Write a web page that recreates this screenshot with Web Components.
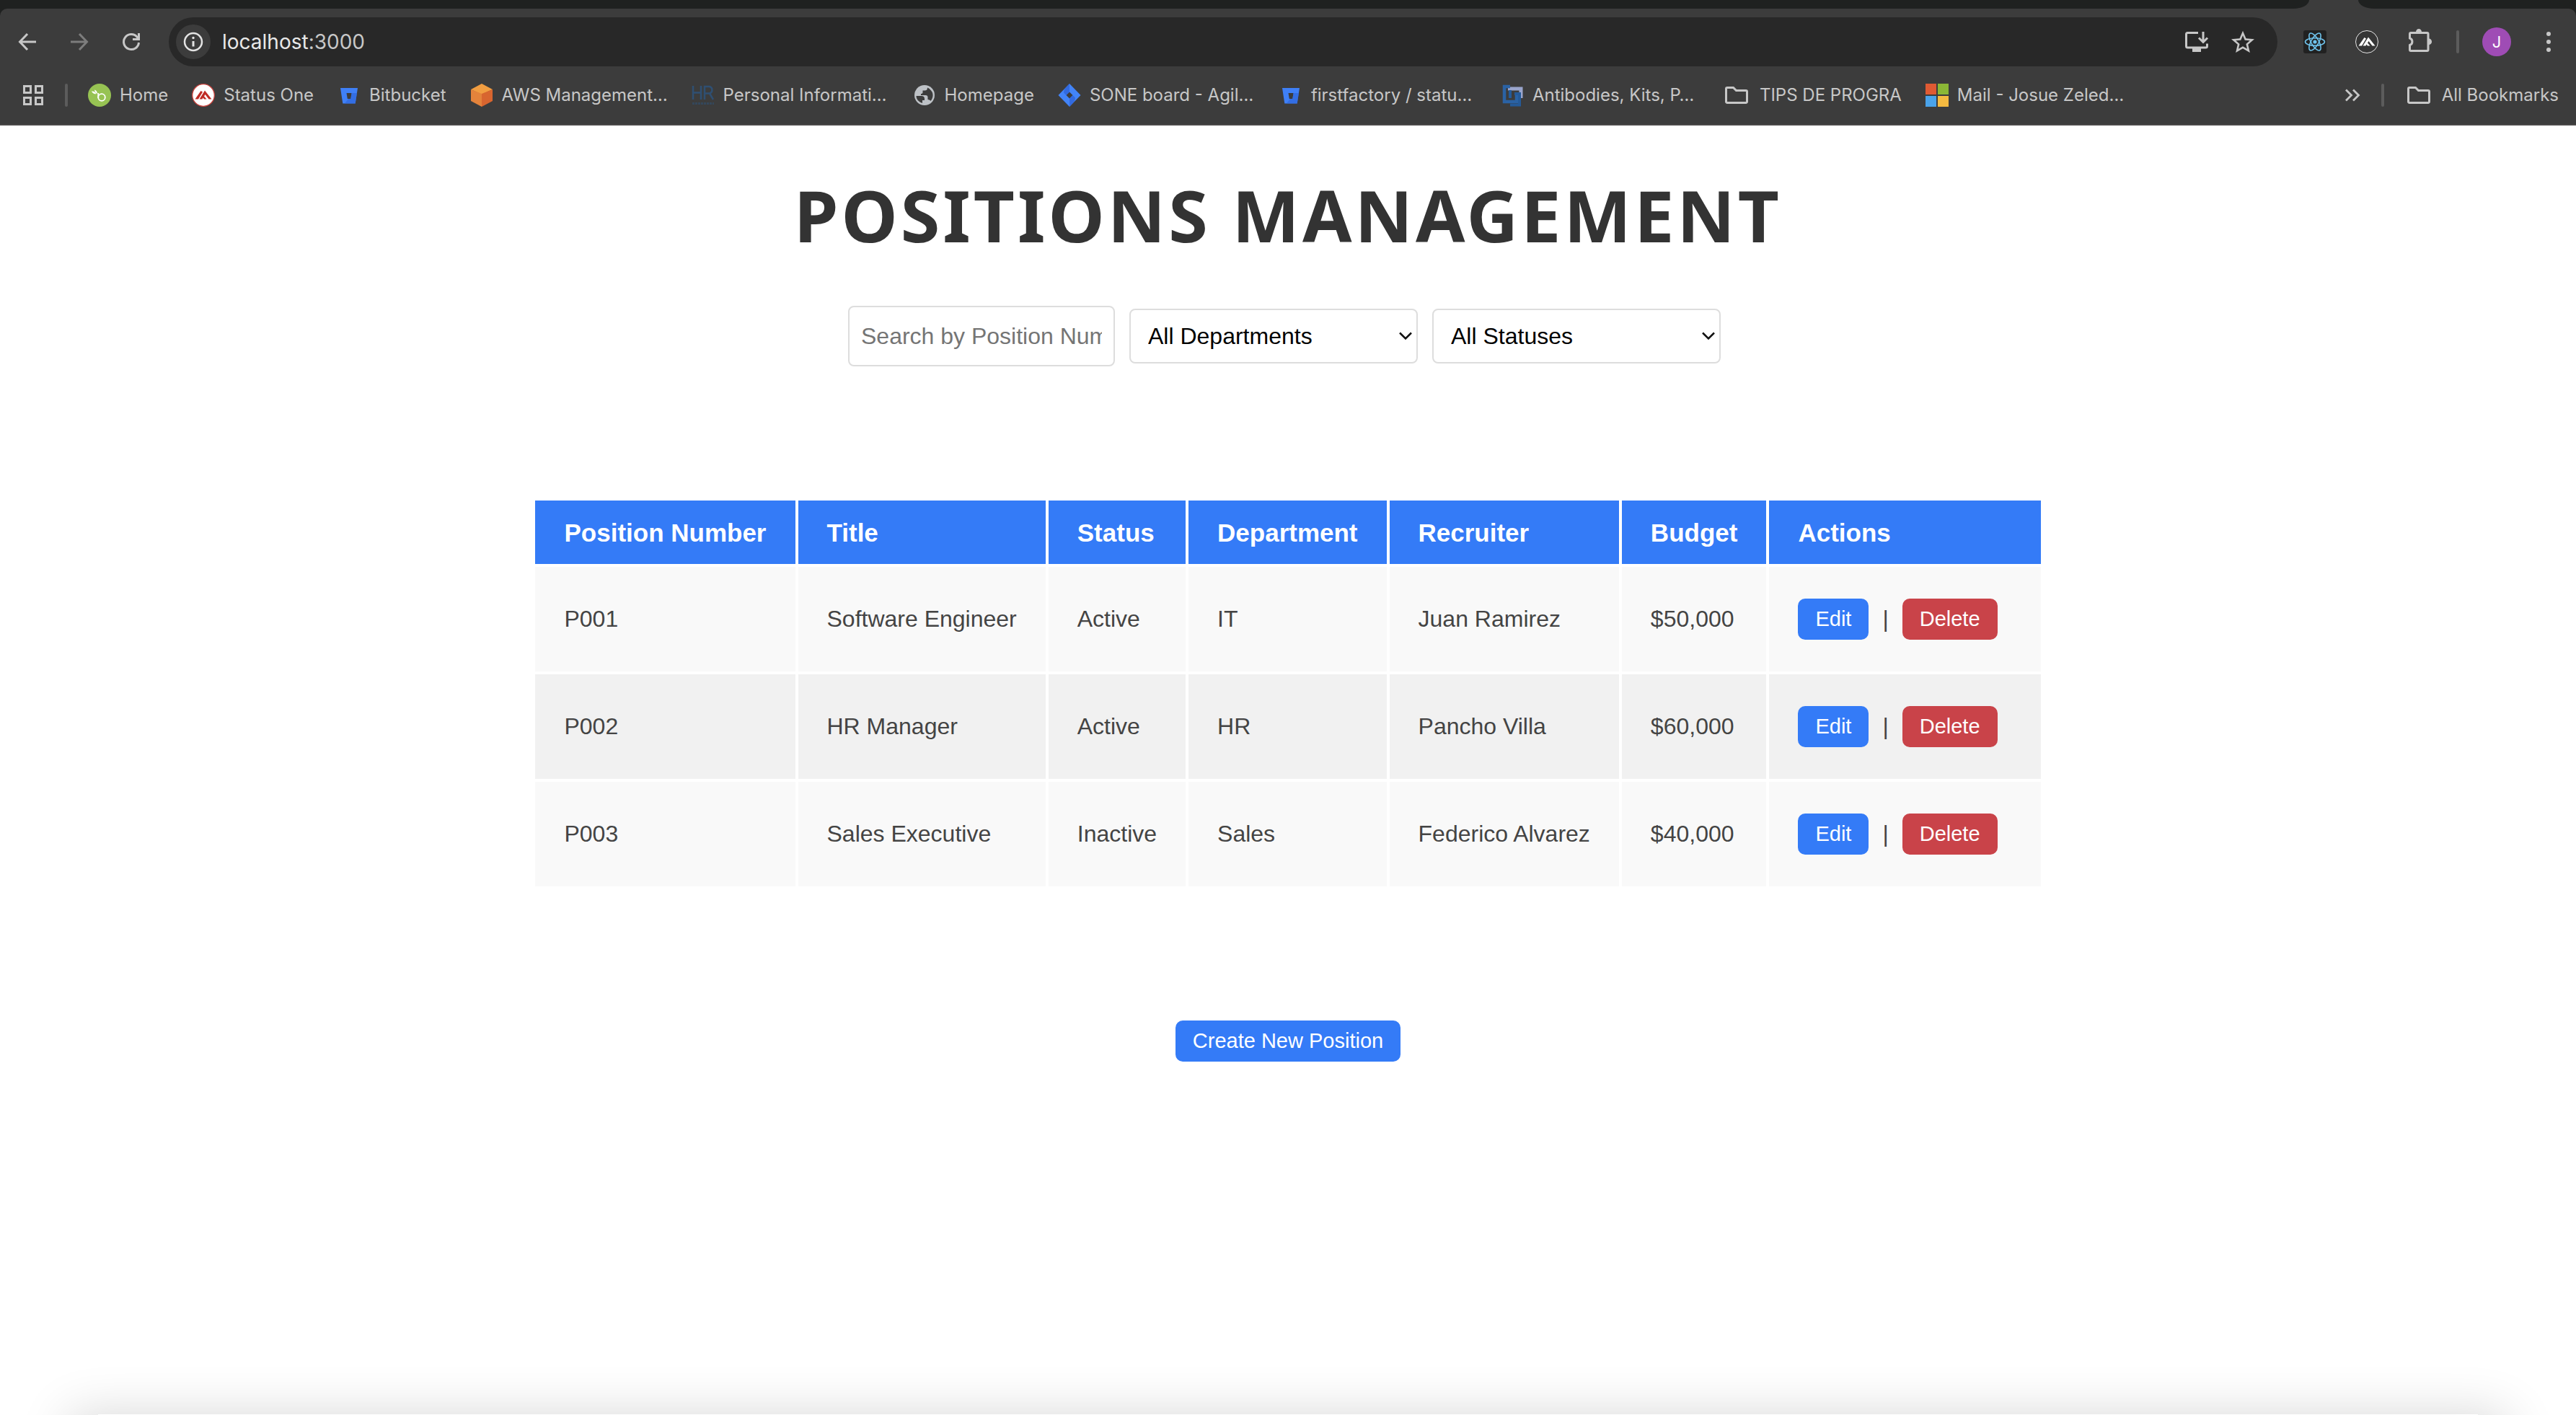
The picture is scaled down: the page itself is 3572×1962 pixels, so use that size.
<!DOCTYPE html>
<html lang="en">
<head>
<meta charset="utf-8">
<title>Positions Management</title>
<style>
html,body{margin:0}
body{background:#fff;font-family:"Liberation Sans",Arial,sans-serif}
</style>
</head>
<body>
<browser-window>
  <browser-toolbar slot="chrome"></browser-toolbar>
  <bookmarks-bar slot="chrome">
    <book-mark icon="bamboo">Home</book-mark>
    <book-mark icon="status">Status One</book-mark>
    <book-mark icon="bitbucket">Bitbucket</book-mark>
    <book-mark icon="aws" cut>AWS Management…</book-mark>
    <book-mark icon="hr" cut>Personal Informati…</book-mark>
    <book-mark icon="globe">Homepage</book-mark>
    <book-mark icon="jira" cut>SONE board - Agil…</book-mark>
    <book-mark icon="bitbucket" cut>firstfactory / statu…</book-mark>
    <book-mark icon="chain" cut>Antibodies, Kits, P…</book-mark>
    <book-mark icon="folder">TIPS DE PROGRA</book-mark>
    <book-mark icon="windows">Mail - Josue Zeled…</book-mark>
    <book-mark slot="end" icon="folder">All Bookmarks</book-mark>
  </bookmarks-bar>
  <positions-page>
    <position-filters></position-filters>
    <positions-table></positions-table>
    <action-button>Create New Position</action-button>
  </positions-page>
</browser-window>

<script>
const ICONS = {
  back: '<svg width="32" height="32" viewBox="0 0 32 32" fill="none" stroke="#c7c7c7" stroke-width="3"><path d="M28 16H6M16 5 5.500 16 16 27"/></svg>',
  forward: '<svg width="32" height="32" viewBox="0 0 32 32" fill="none" stroke="#7d7d7d" stroke-width="3"><path d="M4 16h22M16 5l10.500 11L16 27"/></svg>',
  reload: '<svg width="32" height="32" viewBox="0 0 32 32" fill="none" stroke="#c7c7c7" stroke-width="3"><path d="M26.500 17A10.500 10.500 0 1 1 24 9.200L26 11.500"/><path d="M26.500 4v8.500H18" /></svg>',
  info: '<svg width="32" height="32" viewBox="0 0 32 32" fill="none" stroke="#e3e3e3"><circle cx="16" cy="16" r="12" stroke-width="2.500"/><path d="M16 15v7.500" stroke-width="3"/><circle cx="16" cy="10.500" r="1.700" fill="#e3e3e3" stroke="none"/></svg>',
  install: '<svg width="36" height="36" viewBox="0 0 36 36" fill="none" stroke="#c7c7c7" stroke-width="3"><path d="M20 5.500H5.500a2 2 0 0 0-2 2V24a2 2 0 0 0 2 2h25a2 2 0 0 0 2-2v-3.500"/><path d="M27 4v14M21 12.500l6 6 6-6"/><path d="M12 27h12v5H12z" fill="#c7c7c7" stroke="none"/></svg>',
  star: '<svg width="36" height="36" viewBox="0.750 0.300 22.500 22.500" fill="#c7c7c7"><path d="M22 9.240l-7.190-.62L12 2 9.190 8.630 2 9.240l5.460 4.730L5.820 21 12 17.270 18.180 21l-1.630-7.030L22 9.240zM12 15.400l-3.760 2.270 1-4.280-3.320-2.880 4.380-.38L12 6.100l1.710 4.040 4.380.38-3.320 2.880 1 4.280L12 15.400z"/></svg>',
  react: '<svg width="32" height="32" viewBox="0 0 32 32" fill="none" stroke="#6fc3ec" stroke-width="1.600"><rect width="32" height="32" rx="3" fill="#212121" stroke="none"/><ellipse cx="16" cy="16" rx="13.500" ry="5.200"/><ellipse cx="16" cy="16" rx="13.500" ry="5.200" transform="rotate(60 16 16)"/><ellipse cx="16" cy="16" rx="13.500" ry="5.200" transform="rotate(120 16 16)"/><circle cx="16" cy="16" r="2.600" fill="#6fc3ec" stroke="none"/></svg>',
  statusDark: '<svg width="32" height="32" viewBox="0 0 32 32"><circle cx="16" cy="16" r="15.500" fill="#363636" stroke="#e6e6e6"/><path d="M4.500 21.500 12.500 10l2.500 1.500L9 21.500zM10.500 21.500 18 9.500l9.500 12h-4L18.500 15l-1.500 2.500 3.500 4h-3.500l-1.500-2-1 2z" fill="#fff"/></svg>',
  puzzle: '<svg width="36" height="36" viewBox="0 0 36 36"><path d="M3.500 7a1.500 1.500 0 0 1 1.500-1.500h22.500A1.500 1.500 0 0 1 29 7v22a1.500 1.500 0 0 1-1.500 1.500H5A1.500 1.500 0 0 1 3.500 29v-6.500a5 5 0 0 0 0-9.500z" fill="none" stroke="#c7c7c7" stroke-width="3"/><path d="M12 4.500a4 4.500 0 0 1 8 0zM30 13.500a4 4.200 0 0 1 0 8.500z" fill="#c7c7c7"/></svg>',
  dots: '<svg width="32" height="32" viewBox="0 0 32 32" fill="#c7c7c7"><circle cx="16" cy="5" r="3"/><circle cx="16" cy="16" r="3"/><circle cx="16" cy="27" r="3"/></svg>',
  apps: '<svg width="32" height="32" viewBox="0 0 32 32" fill="none" stroke="#c7c7c7" stroke-width="3"><path d="M3.500 3.500h9v9h-9zM19.500 3.500h9v9h-9zM3.500 19.500h9v9h-9zM19.500 19.500h9v9h-9z"/></svg>',
  more: '<svg width="24" height="24" viewBox="0 0 24 24" fill="none" stroke="#c7c7c7" stroke-width="2.800"><path d="M3 4.500l7.500 7.500L3 19.500M13 4.500l7.500 7.500-7.500 7.500"/></svg>',
  bamboo: '<svg width="32" height="32" viewBox="0 0 32 32"><circle cx="16" cy="16" r="16" fill="#97c353"/><circle cx="19" cy="19" r="4.800" fill="none" stroke="#fff" stroke-width="1.800"/><path d="M14.200 20v-7" stroke="#fff" stroke-width="1.800"/><path d="M5 10.500c3 0 5 .5 6.500 3.800C8.500 14.300 6 13.500 5 10.500zM9 8.500c2.500.8 4 2.500 4 5.500-2-.8-3.600-2.500-4-5.500z" fill="#fff"/></svg>',
  status: '<svg width="32" height="32" viewBox="0 0 32 32"><circle cx="16" cy="16" r="15.300" fill="#fff" stroke="#c9423c" stroke-width="1.300"/><path d="M4.500 21.500 12.500 10l2.500 1.500L9 21.500zM10.500 21.500 18 9.500l9.500 12h-4L18.500 15l-1.500 2.500 3.500 4h-3.500l-1.500-2-1 2z" fill="#bf2b25"/></svg>',
  bitbucket: '<svg width="32" height="32" viewBox="0 0 32 32"><path d="M4 6h24l-3.300 21.500H7.300zM12.500 13l1.300 8h4.500l1.300-8z" fill="#3f80f7" fill-rule="evenodd"/><path d="M27 13h-7.400l-1.300 8H15l-5 6.500h14.700z" fill="#2f66dc" opacity=".7"/></svg>',
  aws: '<svg width="32" height="32" viewBox="0 0 32 32"><path d="M1 8 16 0l15 8-15 7z" fill="#f19d41"/><path d="M1 8l15 6v18L1 24z" fill="#e4833b"/><path d="M31 8l-15 6v18l15-8z" fill="#d8652f"/></svg>',
  hr: '<svg width="32" height="32" viewBox="0 0 32 32" fill="none" stroke="#2f4f72" stroke-width="2.500"><path d="M2 3v19M13 3v19M2 12.500h11M18 22V4h7a5 5 0 0 1 0 9.500h-7M25 13.500 30 22"/><path d="M1 27.500h30" stroke="#34475b" stroke-width="3" stroke-dasharray="3 1"/></svg>',
  globe: '<svg width="32" height="32" viewBox="0 0 32 32"><circle cx="16" cy="16" r="14" fill="#bdc1c6"/><path d="M4.500 17h7c3 0 4.500 1.500 4.500 4v2h-3v4c-5-1.500-8.500-5.500-8.500-10zM20 5.500c0 3-1.500 4-3.500 4h-3v2.500c0 1.500-1 2-2.500 2v2h6.500c2 0 3 1.200 3 3V22c2 0 3.500 1 4 2 4-4.500 4-11 .5-14.500C23.500 7.500 22 6.300 20 5.500z" fill="#3c3c3c"/></svg>',
  jira: '<svg width="32" height="32" viewBox="0 0 32 32"><path d="M16 0l15.500 16L16 32 .5 16zm0 11.500L11.500 16l4.500 4.500 4.500-4.500z" fill="#4284f8" fill-rule="evenodd"/><path d="M16 0v11.500L11.500 16 8 12.500c0-5 4-8 8-12.500zM16 32V20.500l4.500-4.500 3.500 3.500c0 5-4 8-8 12.500z" fill="#2c60d6" opacity=".7"/></svg>',
  chain: '<svg width="32" height="32" viewBox="0 0 32 32" fill="none"><path d="M10 7h18v13" stroke="#9aa5cc" stroke-width="5"/><path d="M13 4H5v21h17V15" stroke="#2a62a4" stroke-width="4.500"/><path d="M13 9v11M13 29.500h13V14h-7" stroke="#245a99" stroke-width="4"/></svg>',
  folder: '<svg width="40" height="32" viewBox="0 0 40 32" fill="none" stroke="#c7c7c7" stroke-width="3"><path d="M5.500 7A1.500 1.500 0 0 1 7 5.500h8.500l4 4H33a1.500 1.500 0 0 1 1.500 1.500v14a1.500 1.500 0 0 1-1.500 1.500H7A1.500 1.500 0 0 1 5.500 25z"/></svg>',
  windows: '<svg width="32" height="32" viewBox="0 0 32 32"><path d="M0 0h15v15H0z" fill="#df5a33"/><path d="M17 0h15v15H17z" fill="#8bb736"/><path d="M0 17h15v15H0z" fill="#4aa3ea"/><path d="M17 17h15v15H17z" fill="#f5ba41"/></svg>'
};

customElements.define('ui-icon', class extends HTMLElement {
  static observedAttributes = ['name'];
  constructor() {
    super();
    this.attachShadow({mode: 'open'}).innerHTML = '<style>:host{display:flex;flex:none}svg{display:block}</style><span></span>';
  }
  attributeChangedCallback(attr, old, value) {
    this.shadowRoot.querySelector('span').innerHTML = ICONS[value] || '';
  }
});

const define = (name, html, setup) => customElements.define(name, class extends HTMLElement {
  constructor() {
    super();
    this.attachShadow({mode: 'open'}).innerHTML = html;
  }
  connectedCallback() { if (setup) setup(this, this.shadowRoot); }
});

define('browser-window', `
<style>
  :host{display:flex;flex-direction:column;min-height:100vh;background:#fff;overflow:hidden}
  header{background:#1f2120;border-bottom:2px solid #4a4848}
  .tabs{display:flex;height:12px;background:linear-gradient(#3c3c3c,#3c3c3c) right 200px top/300px 12px no-repeat}
  .tabs i{background:#1f2120}
  .left{flex:1;border-bottom-right-radius:22px 12px}
  .right{width:302px;border-bottom-left-radius:22px 12px}
  .gap{width:68px}
  .bars{background:#3c3c3c;border-radius:10px 10px 0 0}
  main{flex:1}
  .dock{height:1px;margin:0 136px;box-shadow:0 40px 70px 40px rgba(0,0,0,.16)}
</style>
<header>
  <div class="tabs"><i class="left"></i><span class="gap"></span><i class="right"></i></div>
  <div class="bars"><slot name="chrome"></slot></div>
</header>
<main><slot></slot></main>
<div class="dock"></div>`);

define('browser-toolbar', `
<style>
  :host{display:flex;align-items:center;height:92px;padding:0 22px;color:#c7c7c7;font-family:Inter,"Liberation Sans",sans-serif}
  button{display:flex;padding:0;border:0;background:none;font:inherit;color:inherit}
  nav{display:flex;gap:40px;margin-right:36px}
  .url{flex:1;display:flex;align-items:center;height:68px;padding:0 30px 0 10px;border-radius:34px;background:#282828}
  .site{padding:8px;border-radius:50%;background:#3c3c3c}
  .address{flex:1;margin-left:16px;font-size:28px;line-height:36px}
  .address b{font-weight:400;color:#e8e8e8}
  .tools{display:flex;gap:28px}
  .ext{display:flex;gap:40px;margin-left:36px}
  .ext,.user{align-items:center}
  .user{display:flex;gap:36px}
  hr{width:4px;height:32px;margin:0 32px;border:0;border-radius:2px;background:#5c5c5c}
  .me{width:40px;height:40px;border-radius:50%;background:#9f4cb5;color:#fff;font-size:22px;align-items:center;justify-content:center}
</style>
<nav>
  <button aria-label="Back"><ui-icon name="back"></ui-icon></button>
  <button aria-label="Forward"><ui-icon name="forward"></ui-icon></button>
  <button aria-label="Reload"><ui-icon name="reload"></ui-icon></button>
</nav>
<div class="url">
  <button class="site" aria-label="Site information"><ui-icon name="info"></ui-icon></button>
  <div class="address"><b>localhost</b>:3000</div>
  <div class="tools">
    <button aria-label="Install"><ui-icon name="install"></ui-icon></button>
    <button aria-label="Bookmark"><ui-icon name="star"></ui-icon></button>
  </div>
</div>
<div class="ext">
  <button aria-label="React tools"><ui-icon name="react"></ui-icon></button>
  <button aria-label="Status"><ui-icon name="statusDark"></ui-icon></button>
  <button aria-label="Extensions"><ui-icon name="puzzle"></ui-icon></button>
</div>
<hr>
<div class="user">
  <button class="me">J</button>
  <button aria-label="Menu"><ui-icon name="dots"></ui-icon></button>
</div>`);

define('bookmarks-bar', `
<style>
  :host{display:flex;align-items:center;height:56px;padding:0 24px 12px 30px}
  button{display:flex;padding:0;border:0;background:none}
  hr{flex:none;width:4px;height:32px;margin:0 28px;border:0;border-radius:2px;background:#5c5c5c}
  nav{flex:1;display:flex;gap:33px}
</style>
<button aria-label="Apps"><ui-icon name="apps"></ui-icon></button><hr>
<nav><slot></slot></nav>
<button aria-label="More bookmarks"><ui-icon name="more"></ui-icon></button>
<hr>
<slot name="end"></slot>`);

define('book-mark', `
<style>
  :host{display:block}
  a{display:flex;align-items:center;gap:12px;color:#c7c7c7;text-decoration:none;font:24px/32px Inter,"Liberation Sans",sans-serif;white-space:nowrap}
  :host([cut]) span{width:230px}
</style>
<a href="#"><ui-icon></ui-icon><span><slot></slot></span></a>`,
  (el, root) => root.querySelector('ui-icon').setAttribute('name', el.getAttribute('icon')));

define('action-button', `
<style>
  :host{display:inline-flex}
  button{border:0;border-radius:10px;padding:12px 24px;background:#347bf7;color:#fff;font:29px/33px "Liberation Sans",Arial,sans-serif}
  :host([danger]) button{background:#c94349}
</style>
<button><slot></slot></button>`);

define('positions-page', `
<style>
  :host{display:flex;flex-direction:column;align-items:center;padding:58px 40px}
  h1{margin:0;color:#333;font:700 99px/132px "Noto Sans","Open Sans",sans-serif;letter-spacing:4px;text-transform:uppercase}
  ::slotted(position-filters){margin-top:60px}
  ::slotted(positions-table){margin:186px 0}
</style>
<h1>Positions Management</h1>
<slot></slot>`);

define('position-filters', `
<style>
  :host{display:flex;align-items:center;gap:20px;padding-right:10px}
  input,select{box-sizing:border-box;border:2px solid #ddd;border-radius:8px;background:#fff;color:#000;font:32px/36px "Liberation Sans",Arial,sans-serif}
  input{width:370px;height:84px;padding:0 16px}
  input::placeholder{color:#757575;opacity:1}
  label{display:grid;align-items:center}
  label>*{grid-area:1/1}
  select{appearance:none;width:400px;height:76px;padding:0 24px}
  svg{justify-self:end;margin-right:8px;pointer-events:none}
</style>
<input type="text" placeholder="Search by Position Number" aria-label="Search by Position Number">
<label><select aria-label="Department"><option>All Departments</option></select><svg width="18" height="12" viewBox="0 0 18 12" fill="none" stroke="#111" stroke-width="2.500"><path d="M1 1.500l8 8 8-8"/></svg></label>
<label><select aria-label="Status"><option>All Statuses</option></select><svg width="18" height="12" viewBox="0 0 18 12" fill="none" stroke="#111" stroke-width="2.500"><path d="M1 1.500l8 8 8-8"/></svg></label>`);

define('positions-table', `
<style>
  :host{display:block}
  table{border-collapse:separate;border-spacing:4px;margin:-4px;font:32px/37px "Liberation Sans",Arial,sans-serif;color:#444;white-space:nowrap}
  th,td{padding:0 40px;text-align:left}
  th{height:88px;background:#347bf7;color:#fff;font-size:35px}
  td{height:145px;background:#f9f9f9}
  tr:nth-child(even) td{background:#f1f1f1}
  td:last-child{padding-right:60px}
  div{display:flex;align-items:center;gap:19px}
</style>
<table><thead><tr></tr></thead><tbody></tbody></table>`,
  (el, root) => {
    const heads = ['Position Number','Title','Status','Department','Recruiter','Budget','Actions'];
    const rows = [
      ['P001','Software Engineer','Active','IT','Juan Ramirez','$50,000'],
      ['P002','HR Manager','Active','HR','Pancho Villa','$60,000'],
      ['P003','Sales Executive','Inactive','Sales','Federico Alvarez','$40,000']
    ];
    root.querySelector('thead tr').innerHTML = heads.map(h => `<th scope="col">${h}</th>`).join('');
    root.querySelector('tbody').innerHTML = rows.map(r => '<tr>' + r.map(c => `<td>${c}</td>`).join('') +
      '<td><div><action-button>Edit</action-button><span>|</span><action-button danger>Delete</action-button></div></td></tr>').join('');
  });
</script>
</body>
</html>
